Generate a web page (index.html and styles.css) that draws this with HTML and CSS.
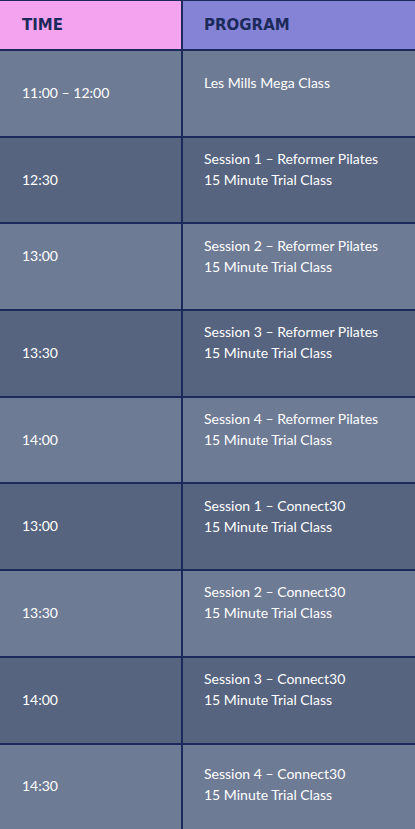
FILE: index.html
```html
<!DOCTYPE html>
<html>
<head>
<meta charset="utf-8">
<link rel="stylesheet" href="styles.css">
</head>
<body>
<div class="schedule">
  <div class="cell head time-head">TIME</div>
  <div class="cell head prog-head">PROGRAM</div>

  <div class="cell time light">11:00 – 12:00</div>
  <div class="cell prog light"><p>Les Mills Mega Class</p></div>

  <div class="cell time dark">12:30</div>
  <div class="cell prog dark"><p>Session 1 – Reformer Pilates</p><p>15 Minute Trial Class</p></div>

  <div class="cell time light raised">13:00</div>
  <div class="cell prog light"><p>Session 2 – Reformer Pilates</p><p>15 Minute Trial Class</p></div>

  <div class="cell time dark">13:30</div>
  <div class="cell prog dark"><p>Session 3 – Reformer Pilates</p><p>15 Minute Trial Class</p></div>

  <div class="cell time light">14:00</div>
  <div class="cell prog light"><p>Session 4 – Reformer Pilates</p><p>15 Minute Trial Class</p></div>

  <div class="cell time dark">13:00</div>
  <div class="cell prog dark"><p>Session 1 – Connect30</p><p>15 Minute Trial Class</p></div>

  <div class="cell time light">13:30</div>
  <div class="cell prog light"><p>Session 2 – Connect30</p><p>15 Minute Trial Class</p></div>

  <div class="cell time dark">14:00</div>
  <div class="cell prog dark"><p>Session 3 – Connect30</p><p>15 Minute Trial Class</p></div>

  <div class="cell time light">14:30</div>
  <div class="cell prog light last"><p>Session 4 – Connect30</p><p>15 Minute Trial Class</p></div>
</div>
</body>
</html>
```
FILE: styles.css
```css
html, body {
  margin: 0;
  padding: 0;
  background: #6e7b95;
}

.schedule {
  display: grid;
  grid-template-columns: 181px 1fr;
  grid-template-rows: 48px repeat(9, 84.7px);
  column-gap: 2px;
  row-gap: 2px;
  background: #1b2a5a;
  padding-top: 1px;
  width: 415px;
  height: 829px;
  overflow: hidden;
  box-sizing: border-box;
  font-family: "Lato", "Open Sans", sans-serif;
  color: #ffffff;
}

.cell {
  display: flex;
  flex-direction: column;
  justify-content: center;
  box-sizing: border-box;
}

.head {
  font-family: "DejaVu Sans", sans-serif;
  font-weight: bold;
  font-size: 15px;
  letter-spacing: 0;
  color: #1b2a5a;
}

.time-head {
  background: #f4a3ee;
  padding-left: 22px;
}

.prog-head {
  background: #8583d6;
  padding-left: 21px;
}

.light { background: #6e7b95; }
.dark { background: #56647f; }

.time {
  padding-left: 22px;
  padding-bottom: 2px;
  font-size: 14px;
}

.time.raised {
  padding-bottom: 22px;
}

.prog {
  padding-left: 21px;
  padding-bottom: 22px;
  font-size: 14px;
}

.prog.last {
  padding-bottom: 5px;
}

.prog p {
  margin: 0;
  line-height: 21px;
}
```
